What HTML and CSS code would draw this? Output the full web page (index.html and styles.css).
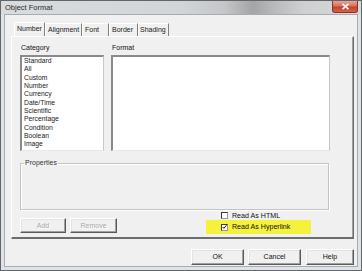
FILE: index.html
```html
<!DOCTYPE html>
<html>
<head>
<meta charset="utf-8">
<title>Object Format</title>
<link rel="stylesheet" href="styles.css">
</head>
<body>
<div class="window">
  <div class="titlebar">
    <span class="title">Object Format</span>
    <div class="close"><svg width="9" height="7" viewBox="0 0 9 7"><path d="M1.5 0.8 L7.5 6.2 M7.5 0.8 L1.5 6.2" stroke="#fff" stroke-width="1.7"/></svg></div>
  </div>
  <div class="client">
    <div class="tabs">
      <div class="tab active tab-number">Number</div>
      <div class="tab tab-align">Alignment</div>
      <div class="tab tab-font">Font</div>
      <div class="tab tab-border">Border</div>
      <div class="tab tab-shading">Shading</div>
    </div>
    <div class="panel">
      <div class="top-row">
        <div class="col cat">
          <div class="label">Category</div>
          <ul class="listbox">
            <li>Standard</li>
            <li>All</li>
            <li>Custom</li>
            <li>Number</li>
            <li>Currency</li>
            <li>Date/Time</li>
            <li>Scientific</li>
            <li>Percentage</li>
            <li>Condition</li>
            <li>Boolean</li>
            <li>Image</li>
          </ul>
        </div>
        <div class="col fmt">
          <div class="label">Format</div>
          <div class="listbox"></div>
        </div>
      </div>
      <fieldset class="group"><legend>Properties</legend></fieldset>
      <div class="bottom-row">
        <button class="btn disabled btn-add">Add</button>
        <button class="btn disabled btn-remove">Remove</button>
        <div class="checks">
          <div class="check"><span class="box"></span>Read As HTML</div>
          <div class="check hl"><span class="box"><svg width="6" height="6" viewBox="0 0 6 6"><path d="M0.6 2.8 L2.3 4.6 L5.4 0.9" stroke="#111" stroke-width="1.2" fill="none"/></svg></span>Read As Hyperlink</div>
        </div>
      </div>
    </div>
    <div class="dialog-buttons">
      <button class="btn btn-ok">OK</button>
      <button class="btn btn-cancel">Cancel</button>
      <button class="btn btn-help">Help</button>
    </div>
  </div>
</div>
</body>
</html>
```

FILE: styles.css
```css
html, body {
  margin: 0;
  padding: 0;
}
body {
  width: 362px;
  height: 271px;
  overflow: hidden;
  font-family: "Liberation Sans", Arial, sans-serif;
  font-size: 7px;
  color: #111;
}
.window {
  box-sizing: border-box;
  width: 362px;
  height: 271px;
  border: 1px solid #62666b;
  background: #dfe2e6;
  display: flex;
  flex-direction: column;
}
.titlebar {
  height: 13px;
  display: flex;
  align-items: flex-start;
  background: linear-gradient(to right, #d9dcdf 0%, #d2d5d8 50%, #c4c6c8 62%, #a3a5a7 70%, #b9babb 76%, #cfd0d1 84%, #d6d8da 100%);
}
.title {
  font-size: 7.5px;
  line-height: 13px;
  padding-left: 4px;
  color: #2a2a2a;
}
.close {
  margin-left: auto;
  margin-right: 3px;
  width: 26px;
  height: 12px;
  box-sizing: border-box;
  border: 1px solid #8a3428;
  border-top: none;
  border-radius: 0 0 3px 3px;
  background: linear-gradient(to bottom, #e9a596 0%, #d9705d 45%, #c5422d 55%, #d2634c 100%);
  display: flex;
  align-items: center;
  justify-content: center;
}
.client {
  flex: 1;
  margin: 0 3px 3px 3px;
  border: 1px solid #a7acb2;
  background: #f0f0f0;
  display: flex;
  flex-direction: column;
}
.tabs {
  display: flex;
  margin-top: 8px;
  margin-left: 9px;
  height: 13px;
}
.tab {
  box-sizing: border-box;
  height: 13px;
  line-height: 12px;
  padding: 0 0 0 2px;
  border-top: 1px solid #fff;
  border-left: 1px solid #fff;
  border-right: 1px solid #808080;
  white-space: nowrap;
  color: #1a1a1a;
}
.tab.active {
  height: 14px;
  margin-top: -1px;
  margin-bottom: -1px;
  position: relative;
  z-index: 1;
  background: #f0f0f0;
}
.tab-number { width: 31px; }
.tab-align { width: 37px; }
.tab-font { width: 27px; }
.tab-border { width: 29px; }
.tab-shading { width: 31px; padding-left: 1px; }
.panel {
  position: relative;
  box-sizing: border-box;
  margin-left: 6px;
  margin-right: 3px;
  height: 203px;
  border-top: 1px solid #fff;
  border-left: 1px solid #fff;
  border-right: 1px solid #6c6c6c;
  border-bottom: 2px solid #6c6c6c;
  box-shadow: inset -1px 0 0 #a0a0a0;
  padding: 6px 0 0 8px;
  display: flex;
  flex-direction: column;
}
.top-row {
  display: flex;
  gap: 7px;
}
.col {
  display: flex;
  flex-direction: column;
}
.cat {
  width: 84px;
}
.fmt {
  width: 219px;
}
.label {
  line-height: 9px;
  height: 9px;
  margin-bottom: 3px;
  padding-left: 1px;
}
.listbox {
  box-sizing: border-box;
  margin: 0;
  padding: 0 0 0 2px;
  list-style: none;
  height: 96px;
  background: #fff;
  border-top: 2px solid #8a8a8a;
  border-left: 2px solid #8a8a8a;
  border-right: 1px solid #c8c8c8;
  border-bottom: 1px solid #e8e8e8;
}
.listbox li {
  line-height: 8.35px;
  height: 8.35px;
  font-size: 6.8px;
  color: #1a1a1a;
}
.group {
  box-sizing: border-box;
  margin: 8px 0 0 0;
  padding: 0;
  width: 309px;
  height: 51px;
  border: 1px solid #c4c4c4;
  box-shadow: 1px 1px 0 #fff, inset 1px 1px 0 #fff;
}
.group legend {
  margin-left: 3px;
  padding: 0 1px;
  line-height: 8px;
  font-size: 7px;
  color: #333;
}
.bottom-row {
  display: flex;
  align-items: flex-end;
  margin-top: 1px;
}
.btn {
  box-sizing: border-box;
  font-family: "Liberation Sans", Arial, sans-serif;
  font-size: 7px;
  color: #111;
  background: #f0f0f0;
  margin: 0;
  padding: 0;
  border-top: 1px solid #fff;
  border-left: 1px solid #fff;
  border-right: 1px solid #5a5a5a;
  border-bottom: 1px solid #5a5a5a;
  box-shadow: inset -1px -1px 0 #a0a0a0, inset 1px 1px 0 #e3e3e3;
  height: 15px;
  line-height: 13px;
}
.btn.disabled {
  color: #a8a8a8;
  text-shadow: 1px 1px 0 #fff;
}
.btn-add {
  width: 46px;
  margin-bottom: 1px;
}
.btn-remove {
  width: 47px;
  margin-left: 4px;
  margin-bottom: 1px;
}
.checks {
  margin-left: 89px;
  display: flex;
  flex-direction: column;
}
.check {
  display: flex;
  align-items: center;
  height: 9px;
  padding-left: 15px;
  white-space: nowrap;
  font-size: 7.1px;
}
.check.hl {
  height: 14px;
  width: 105px;
  box-sizing: border-box;
  background: #f4f23c;
}
.box {
  box-sizing: border-box;
  width: 7px;
  height: 7px;
  margin-right: 4px;
  background: #fff;
  border-top: 1px solid #3a3a3a;
  border-left: 1px solid #3a3a3a;
  border-right: 1px solid #9a9a9a;
  border-bottom: 1px solid #9a9a9a;
  display: flex;
  align-items: center;
  justify-content: center;
}
.dialog-buttons {
  display: flex;
  justify-content: flex-end;
  margin-top: 10px;
  margin-right: 3px;
  gap: 4px;
}
.dialog-buttons .btn {
  height: 16px;
  line-height: 14px;
}
.btn-ok {
  width: 53px;
}
.btn-cancel {
  width: 53px;
}
.btn-help {
  width: 48px;
  margin-left: 1px;
}
```
